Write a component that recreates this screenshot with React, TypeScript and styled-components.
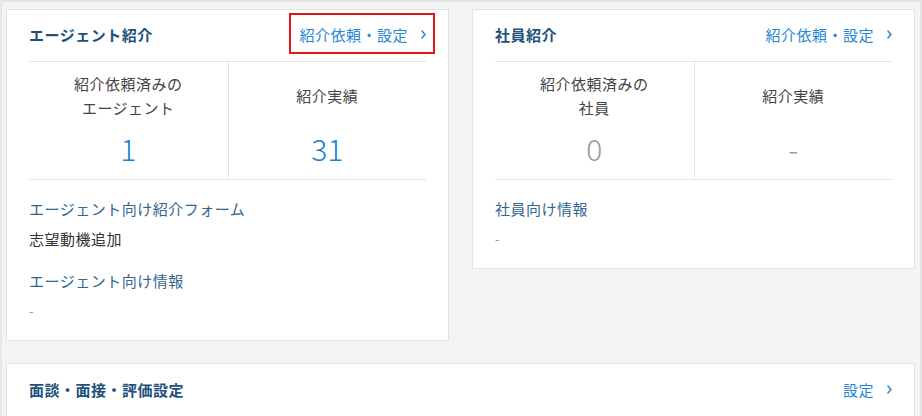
import styled, { createGlobalStyle } from "styled-components"

const GlobalStyle = createGlobalStyle`
  html, body {
    margin: 0;
    padding: 0;
    background: #f4f4f4;
    font-family: "Noto Sans CJK JP", "Noto Sans", sans-serif;
  }
`

const Frame = styled('div')`
  box-sizing: border-box;
  min-height: 440px;
  border-top: 2px solid #e4e4e4;
  border-left: 2px solid #e8e8e8;
  border-right: 2px solid #e4e4e4;
  padding: 7px 5px 20px 4px;
  display: flex;
  flex-direction: column;
  gap: 22px;
`

const Columns = styled('div')`
  display: grid;
  grid-template-columns: 1fr 1fr;
  gap: 23px;
  align-items: start;
`

const Card = styled('section')`
  background: #fff;
  border: 1px solid #e3e3e3;
  padding: 0 22px;
`

const CardHeader = styled('header')`
  height: 51px;
  display: flex;
  align-items: center;
  justify-content: space-between;
  border-bottom: 1px solid #e4e4e4;
`

const CardTitle = styled('h2')`
  margin: 0 0 2px;
  font-size: 15px;
  font-weight: 700;
  letter-spacing: 0.5px;
  color: #21507a;
`

const LinkText = styled('a')<{ $marked?: boolean }>`
  position: relative;
  display: flex;
  align-items: center;
  gap: 13px;
  margin-bottom: 2px;
  font-size: 15px;
  letter-spacing: 0.5px;
  color: #2586d4;
  text-decoration: none;
  cursor: pointer;

  ${p => p.$marked && `
    &::after {
      content: "";
      position: absolute;
      top: -11px;
      bottom: -9px;
      left: -10px;
      right: -9px;
      border: 2px solid #e5141c;
    }
  `}
`

const StatRow = styled('div')`
  display: grid;
  grid-template-columns: 1fr 1fr;
  border-bottom: 1px solid #e4e4e4;
`

const StatCell = styled('div')`
  padding: 10px 0 12px;
  display: flex;
  flex-direction: column;
  align-items: center;
  & + & {
    border-left: 1px solid #e4e4e4;
  }
`

const StatLabel = styled('div')`
  height: 48px;
  display: flex;
  align-items: center;
  text-align: center;
  font-size: 15px;
  line-height: 24px;
  letter-spacing: 0.5px;
  color: #444;
`

const StatValue = styled('div')<{ $muted?: boolean }>`
  margin-top: 9px;
  font-size: 30px;
  font-weight: 300;
  line-height: 38px;
  color: ${p => (p.$muted ? '#9b9b9b' : '#1b80cf')};
`

const InfoList = styled('div')`
  padding: 14px 0 14px;
  display: flex;
  flex-direction: column;
  gap: 12px;
`

const InfoBlock = styled('div')`
  display: flex;
  flex-direction: column;
`

const InfoTitle = styled('div')`
  font-size: 15px;
  line-height: 30px;
  letter-spacing: 0.5px;
  color: #33658f;
`

const InfoValue = styled('div')<{ $empty?: boolean }>`
  font-size: ${p => (p.$empty ? '13px' : '15px')};
  line-height: 30px;
  letter-spacing: 0.5px;
  color: ${p => (p.$empty ? '#9a9a9a' : '#333')};
`

const BottomCard = styled(Card)`
  height: 80px;
`

const BottomHeader = styled(CardHeader)`
  height: 53px;
  border-bottom: none;
`

function Chevron() {
  return (
    <svg width="5" height="9" viewBox="0 0 5 9" fill="none">
      <path d="M1 1 L4 4.5 L1 8" stroke="#2586d4" strokeWidth="1.5" strokeLinecap="round" strokeLinejoin="round" />
    </svg>
  )
}

type Stat = { label: string[]; value: string; muted?: boolean }
type Info = { title: string; value: string }

function IntroCard({ title, marked, stats, infos }: { title: string; marked?: boolean; stats: Stat[]; infos: Info[] }) {
  return (
    <Card>
      <CardHeader>
        <CardTitle>{title}</CardTitle>
        <LinkText $marked={marked}>
          紹介依頼・設定
          <Chevron />
        </LinkText>
      </CardHeader>
      <StatRow>
        {stats.map(s => (
          <StatCell key={s.label.join()}>
            <StatLabel>
              <span>
                {s.label.map((l, i) => (
                  <span key={l}>
                    {i > 0 && <br />}
                    {l}
                  </span>
                ))}
              </span>
            </StatLabel>
            <StatValue $muted={s.muted}>{s.value}</StatValue>
          </StatCell>
        ))}
      </StatRow>
      <InfoList>
        {infos.map(info => (
          <InfoBlock key={info.title}>
            <InfoTitle>{info.title}</InfoTitle>
            <InfoValue $empty={info.value === '-'}>{info.value}</InfoValue>
          </InfoBlock>
        ))}
      </InfoList>
    </Card>
  )
}

export default function App() {
  return (
    <>
      <GlobalStyle />
      <Frame>
        <Columns>
          <IntroCard
            title="エージェント紹介"
            marked
            stats={[
              { label: ['紹介依頼済みの', 'エージェント'], value: '1' },
              { label: ['紹介実績'], value: '31' },
            ]}
            infos={[
              { title: 'エージェント向け紹介フォーム', value: '志望動機追加' },
              { title: 'エージェント向け情報', value: '-' },
            ]}
          />
          <IntroCard
            title="社員紹介"
            stats={[
              { label: ['紹介依頼済みの', '社員'], value: '0', muted: true },
              { label: ['紹介実績'], value: '-', muted: true },
            ]}
            infos={[{ title: '社員向け情報', value: '-' }]}
          />
        </Columns>
        <BottomCard>
          <BottomHeader>
            <CardTitle>面談・面接・評価設定</CardTitle>
            <LinkText>
              設定
              <Chevron />
            </LinkText>
          </BottomHeader>
        </BottomCard>
      </Frame>
    </>
  )
}
